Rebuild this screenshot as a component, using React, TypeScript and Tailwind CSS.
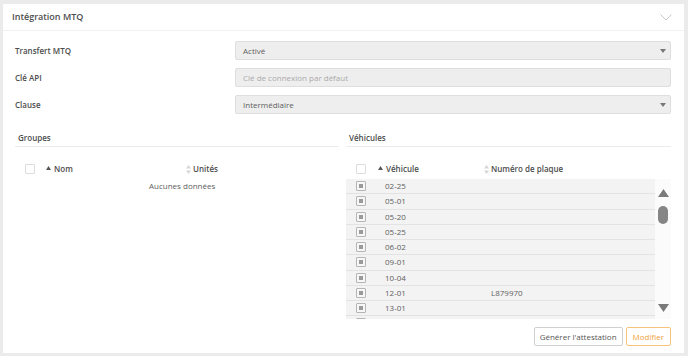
import React from "react";

const rows: [string, string][] = [
  ["02-25", ""],
  ["05-01", ""],
  ["05-20", ""],
  ["05-25", ""],
  ["06-02", ""],
  ["09-01", ""],
  ["10-04", ""],
  ["12-01", "L879970"],
  ["13-01", ""],
  ["", ""],
];

function SortUp() {
  return (
    <svg width="5" height="4" viewBox="0 0 5 4" className="mr-[3px] mb-[2px]">
      <path d="M2.5 0 L5 4 L0 4 Z" fill="#555" />
    </svg>
  );
}

function SortBoth() {
  return (
    <svg width="5" height="9" viewBox="0 0 5 9" className="mr-[2px]">
      <path d="M2.5 0 L5 3.6 L0 3.6 Z" fill="#d6d6d6" />
      <path d="M2.5 9 L5 5.4 L0 5.4 Z" fill="#d6d6d6" />
    </svg>
  );
}

function Caret() {
  return (
    <svg width="6" height="4" viewBox="0 0 6 4">
      <path d="M0 0 L6 0 L3 4 Z" fill="#777" />
    </svg>
  );
}

function EmptyBox() {
  return <div className="w-[10px] h-[10px] border border-[#dcdcdc] bg-white rounded-[1px]" />;
}

function RowBox() {
  return (
    <div className="w-[10px] h-[10px] border border-[#b5b5b5] bg-[#f7f7f7] flex items-center justify-center rounded-[1px]">
      <div className="w-[4px] h-[4px] bg-[#9a9a9a]" />
    </div>
  );
}

export default function App() {
  return (
    <div
      className="w-[688px] h-[356px] bg-[#ebebeb] pt-[4px] pl-[3px] pr-[4px] pb-[3px] overflow-hidden"
      style={{ fontFamily: '"Open Sans", "Noto Sans", sans-serif' }}
    >
      <div className="bg-white h-full flex flex-col">
        {/* header */}
        <div className="h-[27px] border-b border-[#f1f1f1] flex items-center justify-between pl-[9px] pr-[12px] shrink-0">
          <span className="text-[9px] font-semibold text-[#4d4d4d]">Intégration MTQ</span>
          <svg width="12" height="7" viewBox="0 0 12 7">
            <path d="M0.5 0.5 L6 6 L11.5 0.5" fill="none" stroke="#c8c8c8" strokeWidth="1" />
          </svg>
        </div>

        {/* body */}
        <div className="flex-1 flex flex-col pl-[12px] pr-[13px] pt-[10px] pb-[7px]">
          <div className="flex flex-col gap-[8px]">
            {[
              ["Transfert MTQ", "Activé", true, false],
              ["Clé API", "Clé de connexion par défaut", false, true],
              ["Clause", "Intermédiaire", true, false],
            ].map(([label, value, caret, placeholder]) => (
              <div key={label as string} className="flex items-center h-[19px]">
                <div className="w-[220px] text-[8px] font-semibold text-[#4d4d4d]">{label as string}</div>
                <div className="flex-1 h-[19px] bg-[#eeeeee] border border-[#dedede] rounded-[2px] flex items-center justify-between pl-[7px] pr-[4px]">
                  <span className={`text-[8px] ${placeholder ? "text-[#aaa]" : "text-[#606060]"}`}>{value as string}</span>
                  {caret ? <Caret /> : null}
                </div>
              </div>
            ))}
          </div>

          <div className="flex gap-[7px] mt-[18px]">
            {/* Groupes */}
            <div className="w-[324px] flex flex-col">
              <div className="h-[15px] border-b border-[#ececec] pl-[3px] text-[8px] font-semibold text-[#4d4d4d] leading-[12px]">
                Groupes
              </div>
              <div className="mt-[15px] h-[14px] flex items-center">
                <div className="w-[31px] pl-[10px]">
                  <EmptyBox />
                </div>
                <div className="w-[140px] flex items-center text-[8px] font-semibold text-[#4d4d4d]">
                  <SortUp />
                  Nom
                </div>
                <div className="flex items-center text-[8px] font-semibold text-[#4d4d4d]">
                  <SortBoth />
                  Unités
                </div>
              </div>
              <div className="mt-[4px] text-[8px] text-[#606060] pl-[134px]">Aucunes données</div>
            </div>

            {/* Véhicules */}
            <div className="flex-1 flex flex-col">
              <div className="h-[15px] border-b border-[#ececec] pl-[3px] text-[8px] font-semibold text-[#4d4d4d] leading-[12px]">
                Véhicules
              </div>
              <div className="mt-[15px] h-[14px] flex items-center">
                <div className="w-[32px] pl-[10px]">
                  <EmptyBox />
                </div>
                <div className="w-[106px] flex items-center text-[8px] font-semibold text-[#4d4d4d]">
                  <SortUp />
                  Véhicule
                </div>
                <div className="flex items-center text-[8px] font-semibold text-[#4d4d4d]">
                  <SortBoth />
                  Numéro de plaque
                </div>
              </div>
              <div className="flex h-[140px] mt-[3px]">
                <div className="w-[309px] h-full overflow-hidden bg-[#f3f3f3]">
                  {rows.map(([v, p], i) => (
                    <div
                      key={i}
                      className="h-[15.25px] border-b border-[#e3e3e3] flex items-center text-[8px] text-[#606060]"
                    >
                      <div className="w-[39px] pl-[10px]">
                        <RowBox />
                      </div>
                      <div className="w-[106px]">{v}</div>
                      <div>{p}</div>
                    </div>
                  ))}
                </div>
                <div className="flex-1 bg-[#fbfbfb] flex flex-col items-center">
                  <svg width="11" height="8" viewBox="0 0 11 8" className="mt-[10px]">
                    <path d="M5.5 0 L11 8 L0 8 Z" fill="#7a7a7a" />
                  </svg>
                  <div className="w-[10px] h-[18px] bg-[#858585] rounded-full mt-[9px]" />
                  <div className="flex-1" />
                  <svg width="11" height="8" viewBox="0 0 11 8" className="mb-[7px]">
                    <path d="M0 0 L11 0 L5.5 8 Z" fill="#7a7a7a" />
                  </svg>
                </div>
              </div>
              <div className="flex justify-end gap-[3px] mt-[8px]">
                <div className="h-[19px] px-[5px] border border-[#d0d0d0] rounded-[2px] flex items-center text-[8px] text-[#555] bg-white">
                  Générer l'attestation
                </div>
                <div className="h-[19px] px-[6px] border border-[#f6c37a] rounded-[2px] flex items-center text-[8px] text-[#f2a43c] bg-white">
                  Modifier
                </div>
              </div>
            </div>
          </div>
        </div>
      </div>
    </div>
  );
}
